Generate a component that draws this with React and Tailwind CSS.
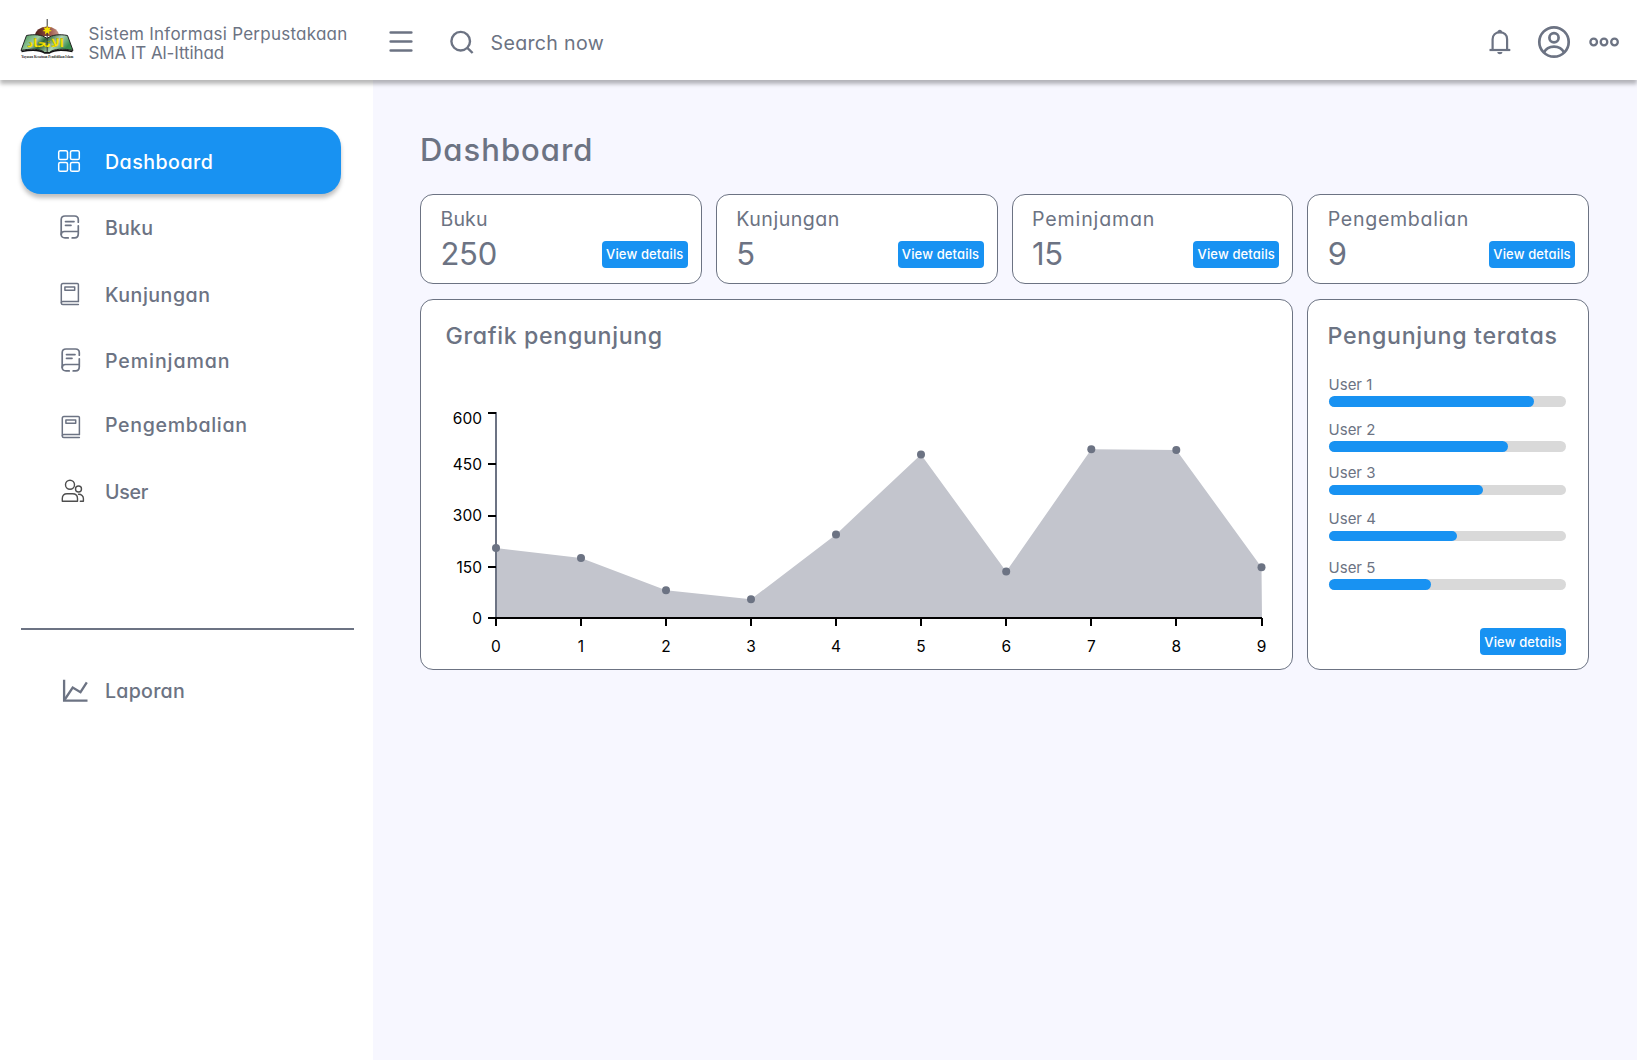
import React from "react";

const stroke = { fill: "none", stroke: "currentColor", strokeLinecap: "round", strokeLinejoin: "round" };

function Logo() {
  return (
    <svg width="56" height="44" viewBox="19 17 56 44" className="shrink-0 overflow-visible">
      <defs>
        <linearGradient id="page" x1="0" x2="1" y1="0" y2="0.3">
          <stop offset="0" stopColor="#3d9150" />
          <stop offset="0.35" stopColor="#a3cfa6" />
          <stop offset="0.5" stopColor="#2b6338" />
          <stop offset="0.75" stopColor="#b0d3b3" />
          <stop offset="1" stopColor="#3b8f4e" />
        </linearGradient>
        <linearGradient id="dome" x1="0" x2="1" y1="0" y2="0">
          <stop offset="0" stopColor="#4a1c17" />
          <stop offset="0.6" stopColor="#9c5546" />
          <stop offset="1" stopColor="#c99a8d" />
        </linearGradient>
      </defs>
      <path d="M35 36a12 9.5 0 0 1 24 0z" fill="url(#dome)" />
      <path d="M26.5 35.5C34 34 42 34.500 47 38.500 52 34.500 60 34 67.500 35.500L73 50.500C64 48.500 54 48.500 49.500 52.500H44.500C40 48.500 30 48.500 21 50.500Z" fill="url(#page)" stroke="#222" strokeWidth="1" />
      <path d="M21.500 51.500C31 49.800 40 50 44.500 53H49.500C54 50 63 49.800 72.500 51.500" fill="none" stroke="#111" strokeWidth="1.500" />
      <path d="M47.200 19V52" stroke="#333" strokeWidth="1" />
      <path d="M47.200 25.500l1 2.600 2.700-.9-1.500 2.400 2.500 1.400-2.800.5.300 2.900-2.200-1.900-2.200 1.900.3-2.900-2.800-.5 2.500-1.400-1.500-2.400 2.700.9z" fill="#f5e400" />
      <text x="45.500" y="47" textAnchor="middle" textLength="37" lengthAdjust="spacingAndGlyphs" fontFamily="DejaVu Sans, sans-serif" fontWeight="700" fontSize="12" fill="#ffe900" stroke="#6c7410" strokeWidth="0.250">الاتحاد</text>
      <text x="47.300" y="58" textAnchor="middle" textLength="52" lengthAdjust="spacingAndGlyphs" fontFamily="Liberation Serif, serif" fontWeight="700" fontSize="3.500" fill="#222">Yayasan Kesatuan Pendidikan Islam</text>
    </svg>
  );
}

function GridIcon() {
  return (
    <svg width="24" height="24" viewBox="0 0 24 24" {...stroke} strokeWidth="1.500">
      <rect x="1.700" y="1.700" width="8.800" height="8.800" rx="1.600" />
      <rect x="13.500" y="1.700" width="8.800" height="8.800" rx="1.600" />
      <rect x="1.700" y="13.500" width="8.800" height="8.800" rx="1.600" />
      <rect x="13.500" y="13.500" width="8.800" height="8.800" rx="1.600" />
    </svg>
  );
}

function BookScrollIcon() {
  return (
    <svg width="20" height="24" viewBox="0 0 20 24" {...stroke} strokeWidth="1.700">
      <path d="M18.300 7.200V4.700C18.300 2.300 16.900 1 14.500 1H5C2.600 1 1.200 2.300 1.200 4.700V19.500" />
      <path d="M18.300 10.800V18.500C18.300 21.500 16.900 22.900 14.500 22.900H12.200M8.200 22.900H5C2.600 22.900 1.200 21.600 1.200 19.400 1.200 17.500 2.600 16.500 4.500 16.500H18.300" />
      <path d="M5.500 6.600H14M5.500 10.300H11" />
    </svg>
  );
}

function BookIcon() {
  return (
    <svg width="20" height="24" viewBox="0 0 20 24" {...stroke} strokeWidth="1.500">
      <path d="M18.400 19.500V2.600Q18.400 1.500 17.300 1.500H3Q1.300 1.500 1.300 3.200V20.700" />
      <path d="M18.400 19.500H2.600Q1.300 19.600 1.300 21 1.300 22.500 2.800 22.500H18.400" />
      <rect x="4.900" y="5" width="9.800" height="3.200" />
    </svg>
  );
}

function PeopleIcon() {
  return (
    <svg width="24" height="24" viewBox="0 0 24 24" {...stroke} strokeWidth="1.400" className="text-[#4e4e4e]">
      <circle cx="9" cy="5.800" r="4.500" />
      <circle cx="17.500" cy="10" r="3" />
      <path d="M1.300 22.200V19.500C1.300 16.500 3 14.700 6 14.700H11.500C14.500 14.700 16.500 16.500 16.500 19.500V22.200Z" />
      <path d="M17.500 15.300C20.500 15.200 22.400 17 22.400 19.600V22.200H19.300" />
    </svg>
  );
}

function ReportIcon() {
  return (
    <svg width="26" height="24" viewBox="0 0 26 24" fill="none" stroke="currentColor" strokeWidth="2.300">
      <path d="M2.100 .8V21.700H25.500" />
      <path d="M2.800 20.500L10.700 8.600 18.500 13.200 24.800 3.300" />
    </svg>
  );
}

const nav = [
  { label: "Buku", Icon: BookScrollIcon, row: "mt-px", icon: "ml-[2.6px] -mt-[2px]", ls: "tracking-[0.2px]" },
  { label: "Kunjungan", Icon: BookIcon, row: "mt-px", icon: "ml-[2.6px] -mt-[2px]", ls: "tracking-[0.5px]" },
  { label: "Peminjaman", Icon: BookScrollIcon, row: "", icon: "ml-[3.6px] -mt-[2px]", ls: "tracking-[0.9px]" },
  { label: "Pengembalian", Icon: BookIcon, row: "-mt-[2px]", icon: "ml-[4px] mt-[5px]", ls: "tracking-[0.65px]" },
  { label: "User", Icon: PeopleIcon, row: "mt-px", icon: "ml-[3.6px] -mt-[2.500px]", ls: "tracking-[-0.25px]" },
];

const stats = [
  { label: "Buku", value: "250", ls: "tracking-[0.1px]" },
  { label: "Kunjungan", value: "5", ls: "tracking-[0.5px]" },
  { label: "Peminjaman", value: "15", ls: "tracking-[0.85px]" },
  { label: "Pengembalian", value: "9", ls: "tracking-[0.68px]" },
];

const visitors = [
  { name: "User 1", width: 205, gap: "mt-[23.8px]" },
  { name: "User 2", width: 179.5, gap: "mt-[13.8px]" },
  { name: "User 3", width: 154, gap: "mt-[12.8px]" },
  { name: "User 4", width: 128, gap: "mt-[15px]" },
  { name: "User 5", width: 102.5, gap: "mt-[17.5px]" },
];

const points = [
  [496, 548], [581, 558], [666, 590.2], [751, 599.3], [836, 534.4],
  [921, 454.4], [1006.200, 571.600], [1091.300, 449.300], [1176.300, 450], [1261.500, 567.200],
];
const yTicks = [[413, 600, 424], [464, 450, 470], [516, 300, 521.300], [567, 150, 572.500], [618, 0, 623.600]];

function ViewDetails({ className }) {
  return (
    <button className={`flex h-[27px] w-[86px] items-center justify-center rounded-[4px] bg-[#1892f2] pt-px text-[13px] leading-none font-medium tracking-[0.14px] whitespace-nowrap text-white ${className}`}>
      View details
    </button>
  );
}

function VisitorChart() {
  const area = "496,618 " + points.map((p) => p.join(",")).join(" ") + " 1262,618";
  return (
    <svg width="872" height="317" viewBox="421 352 872 317" className="-ml-[24.500px] block" fontFamily="Inter, sans-serif" fontSize="15.500">
      <polygon points={area} fill="#c3c5cd" />
      <path d="M496 412V618" stroke="#6c7383" strokeWidth="2" />
      <path d="M488 618H1262" stroke="#000" strokeWidth="2" />
      {yTicks.map(([y, label, base]) => (
        <g key={label}>
          <path d={`M488 ${y}H496`} stroke="#000" strokeWidth="2" />
          <text x="482" y={base} textAnchor="end">{label}</text>
        </g>
      ))}
      {points.map(([x, y], i) => (
        <g key={i}>
          <path d={`M${Math.round(x)} 618V626`} stroke="#000" strokeWidth="2" />
          <circle cx={x} cy={y} r="4" fill="#6c7383" />
          <text x={x} y="652.300" textAnchor="middle">{i}</text>
        </g>
      ))}
    </svg>
  );
}

export default function App() {
  return (
    <div className="flex h-[1060px] w-[1637px] flex-col overflow-hidden bg-white font-['Inter',sans-serif] text-[#6c7383] [font-feature-settings:'cv11']">
      <header className="relative z-10 flex h-20 shrink-0 bg-white pl-[19px] shadow-[0_4px_4px_rgba(0,0,0,0.28)]">
        <div className="flex w-[354px] pt-[17px]">
          <Logo />
          <div className="ml-[13.500px] pt-[7.500px] text-[17px] leading-[19px] whitespace-nowrap">
            <div className="tracking-[0.25px]">Sistem Informasi Perpustakaan</div>
            <div className="tracking-[-0.1px]">SMA IT Al-Ittihad</div>
          </div>
        </div>
        <div className="flex flex-1 items-center">
          <svg width="26" height="26" viewBox="0 0 26 26" {...stroke} strokeWidth="2.700" className="ml-[15px] mt-[3px]">
            <path d="M2.700 3.500H23.300M2.700 12.500H23.300M2.700 21.500H23.300" />
          </svg>
          <svg width="26" height="26" viewBox="0 0 26 26" fill="none" stroke="currentColor" strokeWidth="2.400" className="ml-[35px] mt-[3px]">
            <circle cx="11.700" cy="12.200" r="9.300" />
            <path d="M17.800 18.300L23.600 24" />
          </svg>
          <span className="ml-[15.500px] mt-[5px] text-[19.6px] leading-6 tracking-[0.32px]">Search now</span>
          <div className="ml-auto flex items-center pt-1">
            <svg width="24" height="28" viewBox="1488 28 24 28" fill="none" stroke="currentColor" strokeWidth="2.200" strokeLinejoin="round">
              <path d="M1489.500 50H1510.300" />
              <path d="M1492.600 50V39.200C1492.600 35 1495.500 32.300 1499.800 32.300 1504.100 32.300 1507.100 35 1507.100 39.200V50" />
              <path d="M1497.300 32.500C1497.300 28.900 1502.300 28.900 1502.300 32.500Z" fill="currentColor" stroke="none" />
              <path d="M1497.300 52H1502.400C1502.400 54.900 1497.300 54.900 1497.300 52Z" fill="currentColor" stroke="none" />
            </svg>
            <svg width="34" height="34" viewBox="1537 25 34 34" fill="none" stroke="currentColor" strokeWidth="2.700" className="ml-[25px]">
              <circle cx="1554" cy="42" r="14.700" />
              <circle cx="1554" cy="37.700" r="4.600" />
              <path d="M1543.700 52.800C1545.800 48.800 1549.500 46.600 1554 46.600S1562.200 48.800 1564.300 52.800" />
            </svg>
            <svg width="32" height="12" viewBox="1588 36 32 12" fill="none" stroke="currentColor" strokeWidth="2.300" className="mr-[17px] ml-[17px]">
              <circle cx="1593.700" cy="42" r="3.300" />
              <circle cx="1604" cy="42" r="3.300" />
              <circle cx="1614.500" cy="42" r="3.300" />
            </svg>
          </div>
        </div>
      </header>

      <div className="flex flex-1">
        <nav className="flex w-[373px] shrink-0 flex-col bg-white pt-[47.4px] pl-[21px] text-[19.6px] leading-6 font-medium">
          <div className="flex h-[66.6px] w-[320px] items-center rounded-[20px] bg-[#1892f2] pl-[36px] text-white shadow-[0_4px_4px_rgba(0,0,0,0.25)]">
            <div className="w-[48px] pt-px"><GridIcon /></div>
            <span className="mt-[3px] tracking-[0.48px]">Dashboard</span>
          </div>
          {nav.map(({ label, Icon, row, icon, ls }) => (
            <div key={label} className={`flex h-[66px] items-center pl-[36px] ${row}`}>
              <div className="w-[48px]"><div className={icon}><Icon /></div></div>
              <span className={ls}>{label}</span>
            </div>
          ))}
          <div className="mt-[103px] h-[2px] w-[333px] bg-[#6c7383]" />
          <div className="mt-[28px] flex h-[66px] items-center pl-[36px]">
            <div className="w-[48px]"><div className="ml-[5px]"><ReportIcon /></div></div>
            <span className="tracking-[0.25px]">Laporan</span>
          </div>
        </nav>

        <main className="flex-1 bg-[#f7f7ff] pl-[47px]">
          <h1 className="mt-[50px] h-[64px] text-[31px] leading-10 font-medium tracking-[1px]">Dashboard</h1>
          <div className="grid w-[1169px] grid-cols-4 gap-x-[14px] gap-y-[15px]">
            {stats.map(({ label, value, ls }) => (
              <section key={label} className="h-[90px] rounded-[13px] border border-[#6c7383] bg-white pt-[12.4px] pr-[13px] pl-[19.5px]">
                <div className={`text-[19.6px] leading-6 ${ls}`}>{label}</div>
                <div className="mt-[4.2px] flex justify-between">
                  <span className="text-[31px] leading-9 tracking-[-0.300px]">{value}</span>
                  <ViewDetails className="mt-[5.4px]" />
                </div>
              </section>
            ))}
            <section className="col-span-3 h-[371.400px] rounded-[13px] border border-[#6c7383] bg-white pt-[20px] pl-[24.500px]">
              <h2 className="text-[23.2px] leading-8 font-medium tracking-[0.65px]">Grafik pengunjung</h2>
              <VisitorChart />
            </section>
            <section className="h-[371.400px] rounded-[13px] border border-[#6c7383] bg-white pt-[20px] pr-[22px] pl-[20.3px]">
              <h2 className="-ml-px text-[23.2px] leading-8 font-medium tracking-[0.7px] whitespace-nowrap">Pengunjung teratas</h2>
              {visitors.map(({ name, width, gap }) => (
                <div key={name} className={gap}>
                  <div className="text-[15px] leading-[18px]">{name}</div>
                  <div className="mt-[2.500px] h-[10.5px] w-[237px] rounded-full bg-[#d9d9d9]">
                    <div className="h-full rounded-full bg-[#1892f2]" style={{ width }} />
                  </div>
                </div>
              ))}
              <ViewDetails className="mt-[38.5px] ml-auto" />
            </section>
          </div>
        </main>
      </div>
    </div>
  );
}
